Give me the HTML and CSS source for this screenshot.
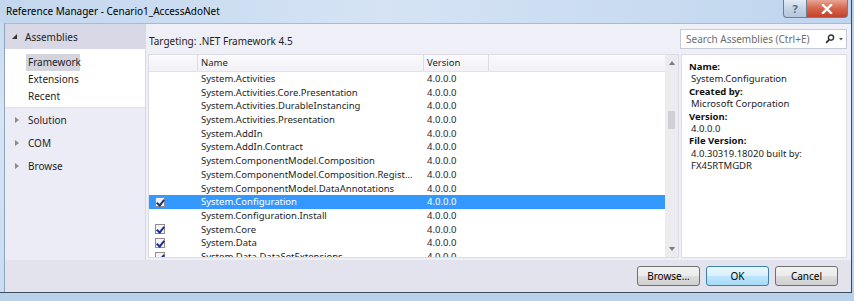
FILE: index.html
```html
<!DOCTYPE html>
<html lang="en">
<head>
    <meta charset="UTF-8">
    <title>Reference Manager - Cenario1_AccessAdoNet</title>
    <link rel="stylesheet" href="styles.css">
</head>
<body>
    <div class="window">
        <div class="titlebar">
            <span class="title">Reference Manager - Cenario1_AccessAdoNet</span>
            <div class="caption-buttons">
                <div class="cap-btn help">?</div>
                <div class="cap-btn close">
                    <svg width="14" height="10" viewBox="0 0 14 10"><path d="M3 1 L11 9 M11 1 L3 9" stroke="#fff" stroke-width="2.4" stroke-linecap="square"/></svg>
                </div>
            </div>
        </div>

        <div class="client">
            <div class="body">
                <!-- Left navigation -->
                <div class="sidebar">
                    <div class="nav-head">
                        <span class="tri-open"></span>Assemblies
                    </div>
                    <div class="nav-sub">
                        <div class="sub-item active">Framework</div>
                        <div class="sub-item">Extensions</div>
                        <div class="sub-item">Recent</div>
                    </div>
                    <div class="nav-group"><span class="tri-closed"></span>Solution</div>
                    <div class="nav-group"><span class="tri-closed"></span>COM</div>
                    <div class="nav-group"><span class="tri-closed"></span>Browse</div>
                </div>

                <div class="main">
                    <div class="target-bar">
                        <span class="targeting">Targeting: .NET Framework 4.5</span>
                        <div class="search">
                            <span class="search-text">Search Assemblies (Ctrl+E)</span>
                            <svg width="20" height="10" viewBox="0 0 20 10">
                                <circle cx="7" cy="3.6" r="2.6" fill="none" stroke="#333" stroke-width="1.4"/>
                                <path d="M5.2 5.6 L2.2 8.8" stroke="#333" stroke-width="1.8"/>
                                <path d="M15 4 L19 4 L17 6.5 Z" fill="#555"/>
                            </svg>
                        </div>
                    </div>

                    <div class="content">
                        <div class="list">
                            <div class="grid">
                                <div class="list-head">
                                    <div class="col-check"></div>
                                    <div class="col-name">Name</div>
                                    <div class="col-ver">Version</div>
                                    <div class="col-rest"></div>
                                </div>
                                <div class="rows" id="rows"></div>
                            </div>
                            <div class="scrollbar">
                                <span class="arrow-up"></span>
                                <span class="thumb"></span>
                                <span class="arrow-down"></span>
                            </div>
                        </div>

                        <div class="details">
                            <div class="d-label">Name:</div>
                            <div class="d-value">System.Configuration</div>
                            <div class="d-label">Created by:</div>
                            <div class="d-value">Microsoft Corporation</div>
                            <div class="d-label">Version:</div>
                            <div class="d-value">4.0.0.0</div>
                            <div class="d-label">File Version:</div>
                            <div class="d-value">4.0.30319.18020 built by:<br>FX45RTMGDR</div>
                        </div>
                    </div>
                </div>
            </div>

            <div class="footer">
                <button class="btn">Browse...</button>
                <button class="btn default">OK</button>
                <button class="btn">Cancel</button>
            </div>
        </div>
    </div>

    <script>
        const assemblies = [
            ['System.Activities', false],
            ['System.Activities.Core.Presentation', false],
            ['System.Activities.DurableInstancing', false],
            ['System.Activities.Presentation', false],
            ['System.AddIn', false],
            ['System.AddIn.Contract', false],
            ['System.ComponentModel.Composition', false],
            ['System.ComponentModel.Composition.Regist...', false],
            ['System.ComponentModel.DataAnnotations', false],
            ['System.Configuration', true, true],
            ['System.Configuration.Install', false],
            ['System.Core', true],
            ['System.Data', true],
            ['System.Data.DataSetExtensions', true]
        ];

        const rows = document.getElementById('rows');

        assemblies.forEach(([name, checked, selected]) => {
            const row = document.createElement('div');
            row.className = 'row' + (selected ? ' selected' : '');
            row.innerHTML = `
                <div class="col-check">${checked ? '<span class="checkbox checked"></span>' : ''}</div>
                <div class="col-name">${name}</div>
                <div class="col-ver">4.0.0.0</div>
                <div class="col-rest"></div>
            `;
            rows.appendChild(row);
        });
    </script>
</body>
</html>
```

FILE: styles.css
```css
* {
    box-sizing: border-box;
    margin: 0;
    padding: 0;
}

body {
    font-family: 'Noto Sans', 'Open Sans', sans-serif;
    font-size: 9.5px;
    color: #1e1e1e;
    background: #b9d1ea;
    width: 854px;
    height: 301px;
    overflow: hidden;
}

.window {
    width: 852px;
    height: 293px;
    display: flex;
    flex-direction: column;
    background: linear-gradient(180deg, #c6daf0 0%, #d7e5f5 40%, #c9dcf0 100%);
    border-right: 1px solid #3d4a5a;
    border-bottom: 1px solid #3d4a5a;
}

/* Title bar */
.titlebar {
    height: 23px;
    flex-shrink: 0;
    display: flex;
    justify-content: space-between;
    align-items: flex-start;
    padding-left: 6px;
    background: linear-gradient(90deg, #c3d7ee 0%, #d5e3f4 45%, #bfd5ee 100%);
}

.title {
    font-size: 10px;
    line-height: 23px;
    color: #000;
}

.caption-buttons {
    display: flex;
    margin-right: 3px;
}

.cap-btn {
    height: 18px;
    border: 1px solid #6d7d92;
    border-top: none;
    display: flex;
    align-items: center;
    justify-content: center;
}

.help {
    width: 24px;
    border-radius: 0 0 0 4px;
    background: linear-gradient(180deg, #e4ecf6 0%, #c5d3e6 50%, #b6c6dc 100%);
    color: #5a6b80;
    font-size: 11px;
    font-weight: bold;
}

.close {
    width: 41px;
    border-left: none;
    border-radius: 0 0 4px 0;
    background: linear-gradient(180deg, #e8a493 0%, #d5654c 50%, #c3422b 100%);
}

/* Client */
.client {
    flex: 1;
    min-height: 0;
    display: flex;
    flex-direction: column;
    margin-left: 4px;
    background: #efeff7;
    border-left: 1px solid #8ea4c0;
    border-top: 1px solid #a9bbd3;
}

.body {
    flex: 1;
    min-height: 0;
    display: flex;
    overflow: hidden;
}

/* Sidebar */
.sidebar {
    width: 141px;
    background: #ececf6;
    border-right: 1px solid #d9d9e3;
}

.nav-head {
    height: 25px;
    display: flex;
    align-items: center;
    padding-left: 7px;
    background: #d8d8e6;
    font-size: 10px;
    color: #1e1e1e;
}

.tri-open {
    width: 0;
    height: 0;
    border-left: 5px solid transparent;
    border-bottom: 5px solid #333;
    margin-right: 8px;
}

.tri-closed {
    width: 0;
    height: 0;
    border-top: 3.5px solid transparent;
    border-bottom: 3.5px solid transparent;
    border-left: 4px solid #8a8a8a;
    margin-right: 9px;
}

.nav-sub {
    background: #fff;
    padding: 5px 0 2px 21px;
    border-bottom: 1px solid #e0e0ea;
}

.sub-item {
    height: 17px;
    line-height: 16px;
    padding-left: 2px;
    font-size: 10px;
}

.sub-item.active {
    width: 54px;
    background: #d4d4de;
}

.nav-group {
    height: 23px;
    display: flex;
    align-items: center;
    padding-left: 10px;
    font-size: 10px;
}

/* Main */
.main {
    flex: 1;
    min-height: 0;
    display: flex;
    flex-direction: column;
    padding-right: 4px;
}

.target-bar {
    height: 30px;
    flex-shrink: 0;
    display: flex;
    justify-content: space-between;
    align-items: flex-start;
    padding: 5px 0 0 3px;
}

.targeting {
    font-size: 10px;
    margin-top: 5px;
}

.search {
    width: 167px;
    height: 20px;
    background: #fff;
    border: 1px solid #c5cbd6;
    display: flex;
    align-items: center;
    justify-content: space-between;
    padding: 0 2px 0 5px;
}

.search-text {
    color: #6d6d6d;
    font-size: 10px;
}

.content {
    flex: 1;
    min-height: 0;
    display: flex;
    gap: 2px;
    padding: 0 0 2px 2px;
}

.list {
    width: 531px;
    display: flex;
    background: #fff;
    border: 1px solid #dcdce6;
    overflow: hidden;
}

.grid {
    flex: 1;
    overflow: hidden;
}

.list-head,
.row {
    display: flex;
}

.list-head {
    height: 17px;
    line-height: 16px;
    background: linear-gradient(180deg, #fbfbfd 0%, #f1f1f7 100%);
    border-bottom: 1px solid #e2e2ea;
}

.list-head > div {
    border-right: 1px solid #dcdce4;
}

.col-check {
    width: 49px;
    display: flex;
    align-items: center;
    padding-left: 6px;
}

.col-name {
    width: 226px;
    padding-left: 3px;
    white-space: nowrap;
    overflow: hidden;
}

.col-ver {
    width: 65px;
    padding-left: 3px;
}

.col-rest {
    flex: 1;
}

.list-head .col-rest {
    border-right: none;
}

.row {
    height: 13.7px;
    line-height: 13.7px;
}

.row.selected {
    background: #3399ff;
}

.row.selected .col-name,
.row.selected .col-ver {
    color: #fff;
}

.checkbox {
    width: 10px;
    height: 10px;
    border: 1px solid #8f8f8f;
    background: #f4f4f4;
    position: relative;
}

.checkbox.checked::after {
    content: '';
    position: absolute;
    left: 2px;
    top: 0;
    width: 3px;
    height: 6px;
    border-right: 2px solid #1b2f8f;
    border-bottom: 2px solid #1b2f8f;
    transform: rotate(40deg);
}

.scrollbar {
    width: 13px;
    background: #ebebf0;
    display: flex;
    flex-direction: column;
    align-items: center;
    padding: 6px 0;
}

.arrow-up {
    width: 0;
    height: 0;
    border-left: 3.5px solid transparent;
    border-right: 3.5px solid transparent;
    border-bottom: 4px solid #7c7c86;
}

.thumb {
    width: 7px;
    height: 18px;
    margin-top: 46px;
    background: #cfcfd6;
    border-radius: 1px;
}

.arrow-down {
    width: 0;
    height: 0;
    margin-top: auto;
    border-left: 3.5px solid transparent;
    border-right: 3.5px solid transparent;
    border-top: 4px solid #7c7c86;
}

.details {
    flex: 1;
    background: #fff;
    border: 1px solid #dcdce6;
    padding: 6px 0 0 7px;
    line-height: 12.4px;
}

.d-label {
    font-weight: bold;
    color: #111;
}

.d-value {
    padding-left: 2px;
    color: #222;
}

/* Footer */
.footer {
    height: 32px;
    flex-shrink: 0;
    display: flex;
    justify-content: flex-end;
    align-items: flex-start;
    gap: 6px;
    padding: 6px 13px 0 0;
    background: #e3e3ed;
}

.btn {
    width: 63px;
    height: 20px;
    font-family: inherit;
    font-size: 10px;
    color: #000;
    border: 1px solid #707070;
    border-radius: 3px;
    background: linear-gradient(180deg, #f2f2f2 0%, #ebebeb 49%, #dddddd 50%, #cfcfcf 100%);
}

.btn.default {
    border-color: #3c7fb1;
    background: linear-gradient(180deg, #eaf6fd 0%, #d9f0fc 49%, #bee6fd 50%, #a7d9f5 100%);
}
```
